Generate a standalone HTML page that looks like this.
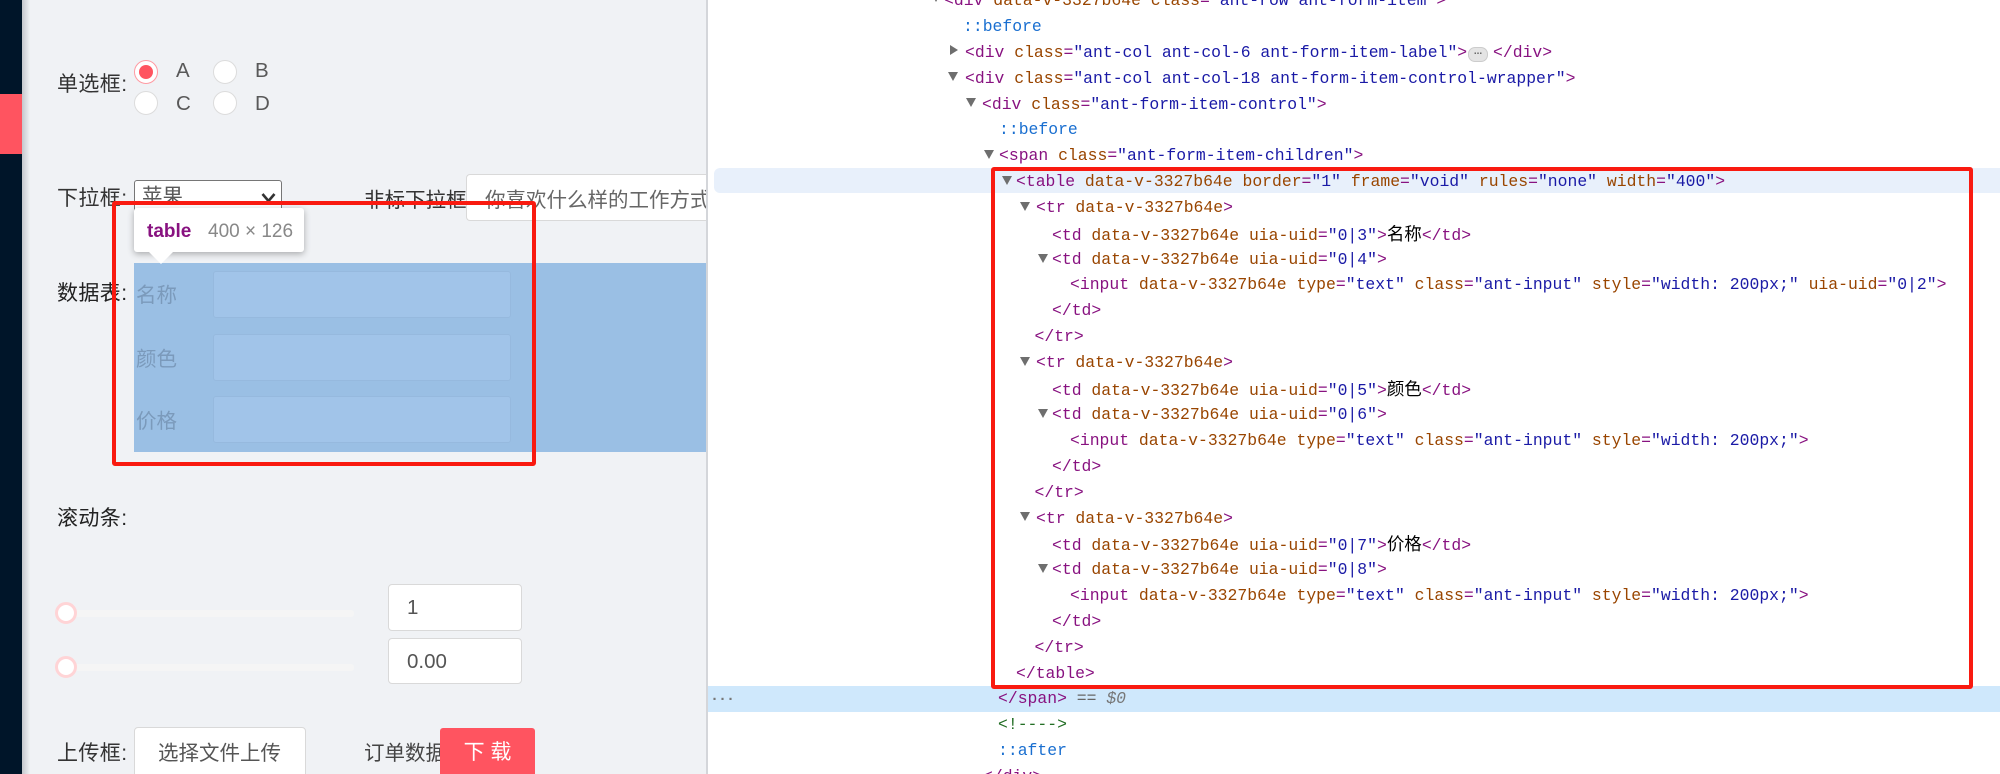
<!DOCTYPE html>
<html lang="zh"><head><meta charset="utf-8"><title>DevTools</title>
<style>
html,body{margin:0;padding:0;width:2000px;height:774px;overflow:hidden;background:#fff}
#s{position:relative;width:2000px;height:774px;overflow:hidden;font-family:"Liberation Sans","Noto Sans CJK SC",sans-serif}
#s div,#s span.a{position:absolute}
.lb{font-size:21px;letter-spacing:.4px;line-height:30px;height:30px;color:#333;white-space:nowrap;left:57px}
.gr{font-size:20.5px;line-height:30px;height:30px;color:#595959;white-space:nowrap}
.rd{width:22px;height:22px;border-radius:50%;background:#fff;border:1px solid #dcdcdc}
.inp{background:#fff;border:1px solid #d9d9d9;border-radius:4px;box-sizing:border-box}
.bi{background:#a1c4e9;border:1px solid #96b9de;border-radius:3px;box-sizing:border-box;left:213px;width:298px;height:47px}
.bt{left:136px;font-size:20.5px;line-height:30px;height:30px;color:#7b9abb;white-space:nowrap}
.tk{left:66px;width:288px;height:7px;background:#f5f5f5;border-radius:3px}
.hd{left:55px;width:16px;height:16px;border-radius:50%;background:#fff;border:3px solid #ffd4d6}
.l{font-family:"Liberation Mono",monospace;font-size:16.42px;line-height:26px;height:26px;white-space:pre;color:#881280}
.n{color:#994500}.v{color:#1a1aa6}.p{color:#1a6fd0}.k{color:#000;font-family:"Noto Sans CJK SC",sans-serif;font-size:17.5px}
.d{width:0;height:0;border-left:5px solid transparent;border-right:5px solid transparent;border-top:9px solid #6e6e6e}
.r{width:0;height:0;border-top:5px solid transparent;border-bottom:5px solid transparent;border-left:8px solid #6e6e6e}
</style></head><body><div id="s">

<div style="left:0;top:0;width:708px;height:774px;background:#f0f2f5"></div>
<div style="left:706px;top:0;width:2px;height:774px;background:#d4d6da"></div>
<div style="left:22px;top:0;width:8px;height:774px;background:linear-gradient(90deg,#c4c7cc,#f0f2f5)"></div>
<div style="left:0;top:0;width:22px;height:774px;background:#001529"></div>
<div style="left:0;top:94px;width:22px;height:60px;background:#ff5460"></div>

<div class="lb" style="top:70px">单选框:</div>
<div class="rd" style="left:134px;top:60px;border-color:#ff9aa2;background:#fff"></div>
<div style="left:139px;top:65px;width:14px;height:14px;border-radius:50%;background:#ff5460"></div>
<div class="rd" style="left:213px;top:60px"></div>
<div class="rd" style="left:134px;top:91px"></div>
<div class="rd" style="left:213px;top:91px"></div>
<div class="gr" style="left:176px;top:56px">A</div>
<div class="gr" style="left:255px;top:56px">B</div>
<div class="gr" style="left:176px;top:89px">C</div>
<div class="gr" style="left:255px;top:89px">D</div>

<div class="lb" style="top:184px">下拉框:</div>
<div style="left:134px;top:180px;width:148px;height:40px;box-sizing:border-box;background:#fff;border:1px solid #767676;border-radius:3px"></div>
<div class="gr" style="left:142px;top:182px">苹果</div>
<svg style="position:absolute;left:261px;top:192px" width="15" height="12" viewBox="0 0 15 12"><path d="M1.5 2 L7.5 9 L13.5 2" fill="none" stroke="#333" stroke-width="2.6"/></svg>
<div class="gr" style="left:364px;top:186px;color:#333">非标下拉框</div>
<div class="inp" style="left:466px;top:174px;width:240px;height:47px;border-right:0;border-radius:4px 0 0 4px"></div>
<div style="left:467px;top:175px;width:239px;height:45px;overflow:hidden"><div class="gr" style="left:18px;top:11px;color:#666">你喜欢什么样的工作方式</div></div>

<div class="lb" style="top:279px;color:#222">数据表:</div>
<div style="left:134px;top:263px;width:572px;height:189px;background:#9abfe4"></div>
<div class="bi" style="top:271px"></div>
<div class="bi" style="top:334px"></div>
<div class="bi" style="top:396px"></div>
<div class="bt" style="top:281px">名称</div>
<div class="bt" style="top:345px">颜色</div>
<div class="bt" style="top:407px">价格</div>

<div class="lb" style="top:504px;color:#222">滚动条:</div>
<div class="tk" style="top:610px"></div>
<div class="hd" style="top:602px"></div>
<div class="tk" style="top:664px"></div>
<div class="hd" style="top:656px"></div>
<div class="inp" style="left:388px;top:584px;width:134px;height:47px"></div>
<div class="inp" style="left:388px;top:638px;width:134px;height:46px"></div>
<div class="gr" style="left:407px;top:593px;color:#555">1</div>
<div class="gr" style="left:407px;top:647px;color:#555">0.00</div>

<div class="lb" style="top:739px">上传框:</div>
<div class="inp" style="left:134px;top:727px;width:172px;height:60px"></div>
<div class="gr" style="left:158px;top:739px;color:#555">选择文件上传</div>
<div class="gr" style="left:364px;top:739px;width:76px;overflow:hidden;color:#444">订单数据</div>
<div style="left:440px;top:728px;width:95px;height:60px;background:#ff5460;border-radius:3px"></div>
<div style="left:440px;top:738px;width:95px;text-align:center;font-size:21px;line-height:30px;color:#fff">下 载</div>

<div style="left:134px;top:208px;width:170px;height:44px;background:#fff;border-radius:3px;box-shadow:0 2px 7px rgba(0,0,0,.3)"></div>
<svg style="position:absolute;left:148px;top:251px" width="26" height="13" viewBox="0 0 26 13"><path d="M0 0H26L13 13Z" fill="#fff"/></svg>
<div style="left:147px;top:218px;font-size:19px;line-height:28px;font-weight:bold;color:#881280">table</div>
<div style="left:208px;top:218px;font-size:19px;line-height:28px;color:#888;white-space:nowrap">400 × 126</div>

<div style="left:714px;top:168px;width:1286px;height:25px;background:#e8f0fb;border-radius:6px 0 0 6px"></div>
<div style="left:708px;top:686px;width:1292px;height:26px;background:#cfe8fc"></div>
<div style="left:710px;top:690px;font-family:'Liberation Mono',monospace;font-size:15px;line-height:14px;color:#777;letter-spacing:-1px;font-weight:bold">...</div>

<div class="d" style="left:931px;top:-7px"></div>
<div class="l" style="left:944px;top:-12px">&lt;div <span class="n">data-v-3327b64e</span> <span class="n">class</span>=<span class="v">"ant-row ant-form-item"</span>&gt;</div>
<div class="l p" style="left:963px;top:14px">::before</div>
<div class="r" style="left:950px;top:45px"></div>
<div class="l" style="left:965px;top:40px">&lt;div <span class="n">class</span>=<span class="v">"ant-col ant-col-6 ant-form-item-label"</span>&gt;</div>
<div style="left:1468px;top:47px;width:20px;height:15px;border-radius:7px;background:#e4e4e4;border:1px solid #ccc;box-sizing:border-box;font:bold 10px/8px 'Liberation Sans',sans-serif;color:#666;text-align:center">...</div>
<div class="l" style="left:1493px;top:40px">&lt;/div&gt;</div>
<div class="d" style="left:948px;top:72px"></div>
<div class="l" style="left:965px;top:66px">&lt;div <span class="n">class</span>=<span class="v">"ant-col ant-col-18 ant-form-item-control-wrapper"</span>&gt;</div>
<div class="d" style="left:966px;top:98px"></div>
<div class="l" style="left:982px;top:92px">&lt;div <span class="n">class</span>=<span class="v">"ant-form-item-control"</span>&gt;</div>
<div class="l p" style="left:999px;top:117px">::before</div>
<div class="d" style="left:984px;top:150px"></div>
<div class="l" style="left:999px;top:143px">&lt;span <span class="n">class</span>=<span class="v">"ant-form-item-children"</span>&gt;</div>
<div class="d" style="left:1002px;top:176px"></div>
<div class="l" style="left:1016px;top:169px">&lt;table <span class="n">data-v-3327b64e</span> <span class="n">border</span>=<span class="v">"1"</span> <span class="n">frame</span>=<span class="v">"void"</span> <span class="n">rules</span>=<span class="v">"none"</span> <span class="n">width</span>=<span class="v">"400"</span>&gt;</div>
<div class="d" style="left:1020px;top:202px"></div>
<div class="l" style="left:1036px;top:195px">&lt;tr <span class="n">data-v-3327b64e</span>&gt;</div>
<div class="l" style="left:1052px;top:221px">&lt;td <span class="n">data-v-3327b64e</span> <span class="n">uia-uid</span>=<span class="v">"0|3"</span>&gt;<span class="k">名称</span>&lt;/td&gt;</div>
<div class="d" style="left:1038px;top:254px"></div>
<div class="l" style="left:1052px;top:247px">&lt;td <span class="n">data-v-3327b64e</span> <span class="n">uia-uid</span>=<span class="v">"0|4"</span>&gt;</div>
<div class="l" style="left:1070px;top:272px">&lt;input <span class="n">data-v-3327b64e</span> <span class="n">type</span>=<span class="v">"text"</span> <span class="n">class</span>=<span class="v">"ant-input"</span> <span class="n">style</span>=<span class="v">"width: 200px;"</span> <span class="n">uia-uid</span>=<span class="v">"0|2"</span>&gt;</div>
<div class="l" style="left:1052px;top:298px">&lt;/td&gt;</div>
<div class="l" style="left:1034.5px;top:324px">&lt;/tr&gt;</div>
<div class="d" style="left:1020px;top:357px"></div>
<div class="l" style="left:1036px;top:350px">&lt;tr <span class="n">data-v-3327b64e</span>&gt;</div>
<div class="l" style="left:1052px;top:376px">&lt;td <span class="n">data-v-3327b64e</span> <span class="n">uia-uid</span>=<span class="v">"0|5"</span>&gt;<span class="k">颜色</span>&lt;/td&gt;</div>
<div class="d" style="left:1038px;top:409px"></div>
<div class="l" style="left:1052px;top:402px">&lt;td <span class="n">data-v-3327b64e</span> <span class="n">uia-uid</span>=<span class="v">"0|6"</span>&gt;</div>
<div class="l" style="left:1070px;top:428px">&lt;input <span class="n">data-v-3327b64e</span> <span class="n">type</span>=<span class="v">"text"</span> <span class="n">class</span>=<span class="v">"ant-input"</span> <span class="n">style</span>=<span class="v">"width: 200px;"</span>&gt;</div>
<div class="l" style="left:1052px;top:454px">&lt;/td&gt;</div>
<div class="l" style="left:1034.5px;top:480px">&lt;/tr&gt;</div>
<div class="d" style="left:1020px;top:512px"></div>
<div class="l" style="left:1036px;top:506px">&lt;tr <span class="n">data-v-3327b64e</span>&gt;</div>
<div class="l" style="left:1052px;top:531px">&lt;td <span class="n">data-v-3327b64e</span> <span class="n">uia-uid</span>=<span class="v">"0|7"</span>&gt;<span class="k">价格</span>&lt;/td&gt;</div>
<div class="d" style="left:1038px;top:564px"></div>
<div class="l" style="left:1052px;top:557px">&lt;td <span class="n">data-v-3327b64e</span> <span class="n">uia-uid</span>=<span class="v">"0|8"</span>&gt;</div>
<div class="l" style="left:1070px;top:583px">&lt;input <span class="n">data-v-3327b64e</span> <span class="n">type</span>=<span class="v">"text"</span> <span class="n">class</span>=<span class="v">"ant-input"</span> <span class="n">style</span>=<span class="v">"width: 200px;"</span>&gt;</div>
<div class="l" style="left:1052px;top:609px">&lt;/td&gt;</div>
<div class="l" style="left:1034.5px;top:635px">&lt;/tr&gt;</div>
<div class="l" style="left:1016px;top:661px">&lt;/table&gt;</div>
<div class="l" style="left:998px;top:686px">&lt;/span&gt; <span style="color:#666">==</span> <span style="color:#777;font-style:italic">$0</span></div>
<div class="l" style="left:998px;top:712px;color:#236e25">&lt;!----&gt;</div>
<div class="l p" style="left:998px;top:738px">::after</div>
<div class="l" style="left:983px;top:764px">&lt;/div&gt;</div>

<div style="left:112px;top:201px;width:424px;height:265px;box-sizing:border-box;border:4px solid #f91a10;border-radius:3px"></div>
<div style="left:991px;top:167px;width:982px;height:522px;box-sizing:border-box;border:4px solid #f91a10;border-radius:3px"></div>
</div></body></html>
